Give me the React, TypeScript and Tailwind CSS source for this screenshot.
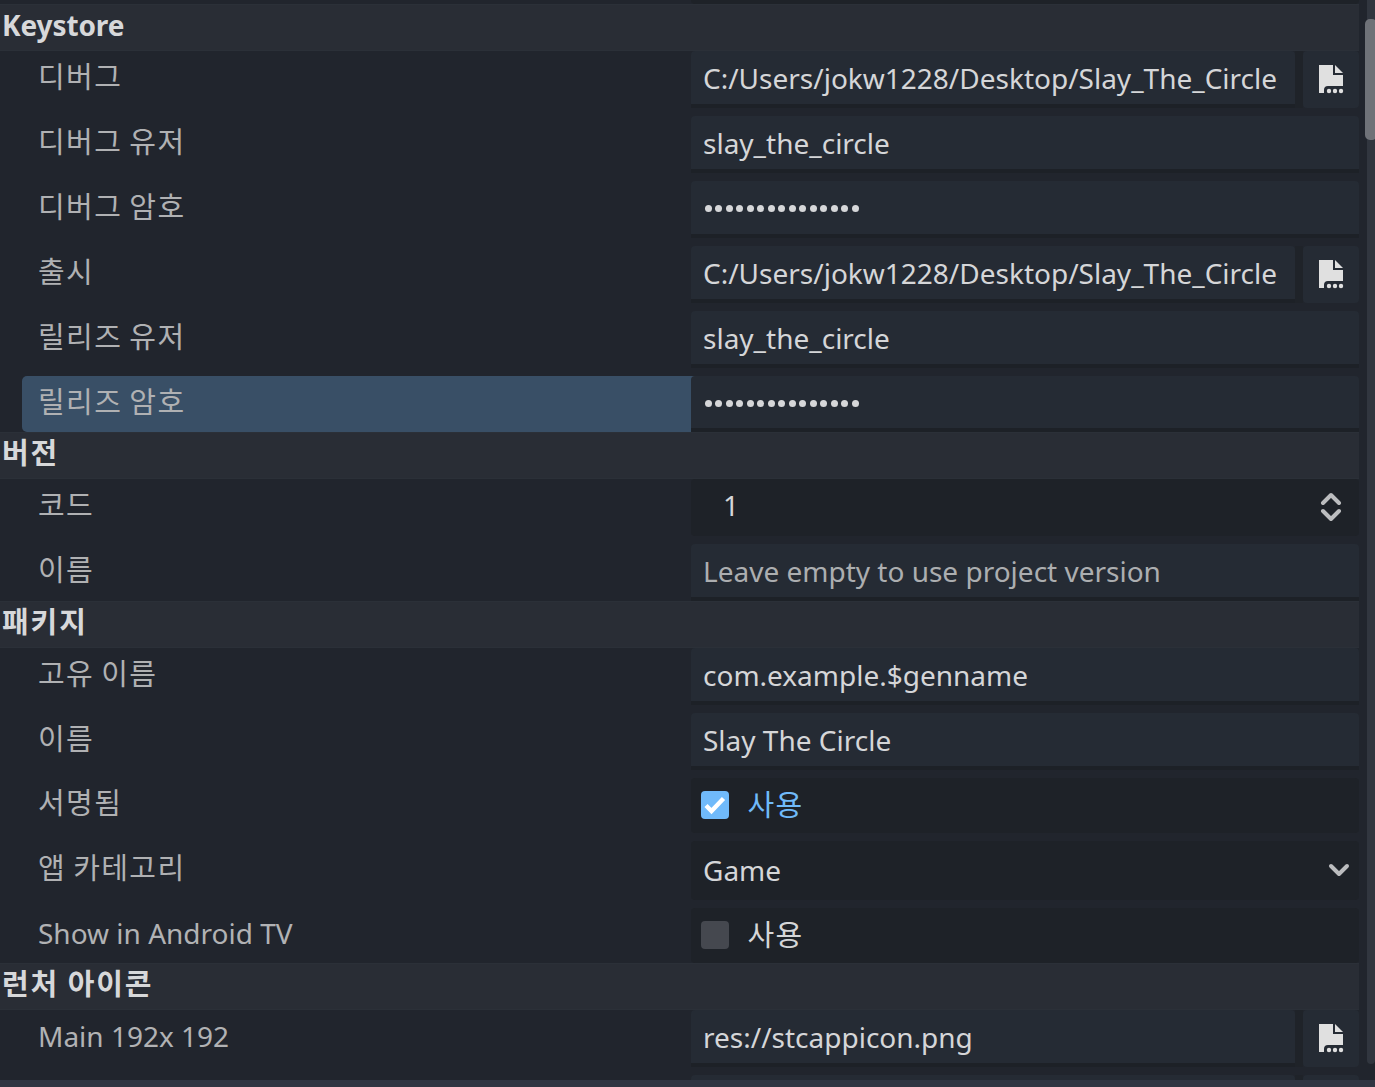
import React from 'react';

type Row = {
  label: string;
  kind: 'text' | 'file' | 'spin' | 'check' | 'select';
  value?: string;
  placeholder?: boolean;
  password?: boolean;
  checked?: boolean;
  selected?: boolean;
  height?: string;
  labelPad?: string;
};

type Section = { title: string; rows: Row[] };

const PATH = 'C:/Users/jokw1228/Desktop/Slay_The_Circle';

const sections: Section[] = [
  {
    title: 'Keystore',
    rows: [
      { label: '디버그', kind: 'file', value: PATH },
      { label: '디버그 유저', kind: 'text', value: 'slay_the_circle' },
      { label: '디버그 암호', kind: 'text', password: true },
      { label: '출시', kind: 'file', value: PATH },
      { label: '릴리즈 유저', kind: 'text', value: 'slay_the_circle' },
      { label: '릴리즈 암호', kind: 'text', password: true, selected: true, height: 'h-[56px]' },
    ],
  },
  {
    title: '버전',
    rows: [
      { label: '코드', kind: 'spin', value: '1' },
      { label: '이름', kind: 'text', value: 'Leave empty to use project version', placeholder: true },
    ],
  },
  {
    title: '패키지',
    rows: [
      { label: '고유 이름', kind: 'text', value: 'com.example.$genname' },
      { label: '이름', kind: 'text', value: 'Slay The Circle' },
      { label: '서명됨', kind: 'check', checked: true, height: 'h-[55px]', labelPad: 'pt-[4px]' },
      { label: '앱 카테고리', kind: 'select', value: 'Game', height: 'h-[59px]', labelPad: 'pt-[6px]' },
      { label: 'Show in Android TV', kind: 'check', height: 'h-[55px]', labelPad: 'pt-[5px]' },
    ],
  },
  {
    title: '런처 아이콘',
    rows: [{ label: 'Main 192x 192', kind: 'file', value: 'res://stcappicon.png' }],
  },
];

const isHangul = (s: string) => /[\uac00-\ud7a3]/.test(s);

function FileIcon() {
  return (
    <svg className="mt-[13px]" width="26" height="30" viewBox="0 0 26 30" fill="#e0e0e0">
      <path d="M1 1h14v10h10v11H10a4 4 0 0 0-4 4v3H1z" />
      <path d="M17 1l8 8h-8z" />
      <circle cx="11" cy="27" r="2.2" />
      <circle cx="17" cy="27" r="2.2" />
      <circle cx="23" cy="27" r="2.2" />
    </svg>
  );
}

function Label({ text, pad }: { text: string; pad?: string }) {
  return isHangul(text) ? (
    <span className={`${pad ?? 'pt-[5px]'} text-[29px] leading-[39px] tracking-[1.4px] [word-spacing:-0.8px] text-[#b0b1b3] font-['Noto_Sans_CJK_KR',sans-serif]`}>{text}</span>
  ) : (
    <span className={`${pad ?? 'pt-[6px]'} text-[28px] leading-[40px] text-[#b1b2b4]`}>{text}</span>
  );
}

function LineEdit({ row }: { row: Row }) {
  return (
    <div className="h-full min-w-0 flex-1 overflow-hidden rounded-t-[4px] border-b-4 border-[#1d2127] bg-[#252b34] pl-3">
      {row.password ? (
        <div className="flex items-center gap-[3.5px] pl-[1.5px] pt-6">
          {Array.from({ length: 15 }, (_, i) => (
            <i key={i} className="size-[7px] shrink-0 rounded-full bg-[#d6d7d9]" />
          ))}
        </div>
      ) : (
        <div className={`whitespace-pre pt-[7px] text-[28px] leading-[40px] ${row.placeholder ? 'text-[#acaeb0]' : 'text-[#d5d6d8]'}`}>{row.value}</div>
      )}
    </div>
  );
}

function Editor({ row }: { row: Row }) {
  switch (row.kind) {
    case 'file':
      return (
        <div className="flex h-full">
          <div className="h-full w-[604px]">
            <LineEdit row={row} />
          </div>
          <div className="h-full w-2 bg-[#1f2329]" />
          <div className="flex h-full w-14 items-start justify-center rounded-[4px] bg-[#252b34]">
            <FileIcon />
          </div>
        </div>
      );
    case 'spin':
      return (
        <div className="flex h-full items-start justify-between rounded-[4px] bg-[#1e2228] pl-8 pr-[17px]">
          <span className="pt-[6px] text-[28px] leading-[40px] text-[#d5d6d8]">{row.value}</span>
          <svg className="mt-[13px]" width="22" height="30" viewBox="0 0 22 30" fill="none" stroke="#bcbdbf" strokeWidth="4" strokeLinecap="round" strokeLinejoin="round">
            <path d="M3 11l8-8 8 8M3 19l8 8 8-8" />
          </svg>
        </div>
      );
    case 'check':
      return (
        <div className="flex h-full items-start rounded-[4px] bg-[#1e2228] pl-[10px]">
          <span className={`mt-[13px] flex size-7 items-center justify-center rounded-[4px] ${row.checked ? 'bg-[#70bafa]' : 'bg-[#45484f]'}`}>
            {row.checked && (
              <svg width="28" height="28" viewBox="0 0 28 28" fill="none" stroke="#fff" strokeWidth="4.4">
                <path d="M5 14.500l5.500 5.500L22.500 7.500" />
              </svg>
            )}
          </span>
          <span className={`pl-[18.5px] pt-[5px] text-[29px] leading-[40px] tracking-[1.4px] font-['Noto_Sans_CJK_KR',sans-serif] ${row.checked ? 'text-[#70bafa]' : 'text-[#d5d6d8]'}`}>사용</span>
        </div>
      );
    case 'select':
      return (
        <div className="flex h-full items-start justify-between rounded-[4px] bg-[#1e2228] pl-3 pr-[9px]">
          <span className="pt-[9px] text-[28px] leading-[40px] text-[#d5d6d8]">{row.value}</span>
          <svg className="mt-[22px]" width="22" height="14" viewBox="0 0 22 14" fill="none" stroke="#bcbdbf" strokeWidth="4" strokeLinecap="round" strokeLinejoin="round">
            <path d="M3 3l8 8 8-8" />
          </svg>
        </div>
      );
    default:
      return <LineEdit row={row} />;
  }
}

function PropertyRow({ row }: { row: Row }) {
  return (
    <div className={`flex w-[1359px] pl-[22px] ${row.height ?? 'h-[57px]'}`}>
      <div className={`flex w-[669px] items-start rounded-l-[5px] pl-4 ${row.selected ? 'bg-[#394f66]' : ''}`}>
        <Label text={row.label} pad={row.labelPad} />
      </div>
      <div className={`w-[668px] ${row.selected ? 'bg-[linear-gradient(to_right,#394f66_4px,transparent_4px)]' : ''}`}>
        <Editor row={row} />
      </div>
    </div>
  );
}

export default function App() {
  return (
    <div className="flex h-[1087px] w-[1375px] flex-col overflow-hidden bg-[#21252d] font-['Noto_Sans',sans-serif]">
      <div className="flex h-[1080px] overflow-hidden">
        <div className="w-[1359px] shrink-0">
          <div className="ml-[691px] h-1 rounded-b-[4px] bg-[#1e2228]" />
          {sections.map((s) => (
            <section key={s.title}>
              <h2
                className={`h-[47px] border-y border-[#2b3038] bg-[#292d35] pl-[2px] font-bold text-[#d7d8da] ${
                  isHangul(s.title) ? "text-[29px] leading-[36px] tracking-[1.9px] font-['Noto_Sans_CJK_KR',sans-serif]" : 'text-[28px] leading-[40px] tracking-[-0.1px]'
                }`}
              >
                {s.title}
              </h2>
              <div className="flex flex-col gap-2">
                {s.rows.map((r, i) => (
                  <PropertyRow key={i} row={r} />
                ))}
              </div>
            </section>
          ))}
          <div className="ml-[691px] mt-2 flex h-[5px]">
            <div className="w-[604px] rounded-t-[4px] bg-[#252b34]" />
            <div className="w-2 bg-[#1f2329]" />
            <div className="w-14 rounded-t-[4px] bg-[#252b34]" />
          </div>
        </div>
        <div className="flex w-4 shrink-0 justify-end">
          <div className="relative h-[1064px] w-2 rounded-b-[4px] bg-[#31363f]">
            <div className="absolute -left-[2px] top-[19px] h-[121px] w-[12px] rounded-[5px] bg-[#6f7278]" />
          </div>
        </div>
      </div>
      <div className="h-[7px] bg-[#303542]" />
    </div>
  );
}
